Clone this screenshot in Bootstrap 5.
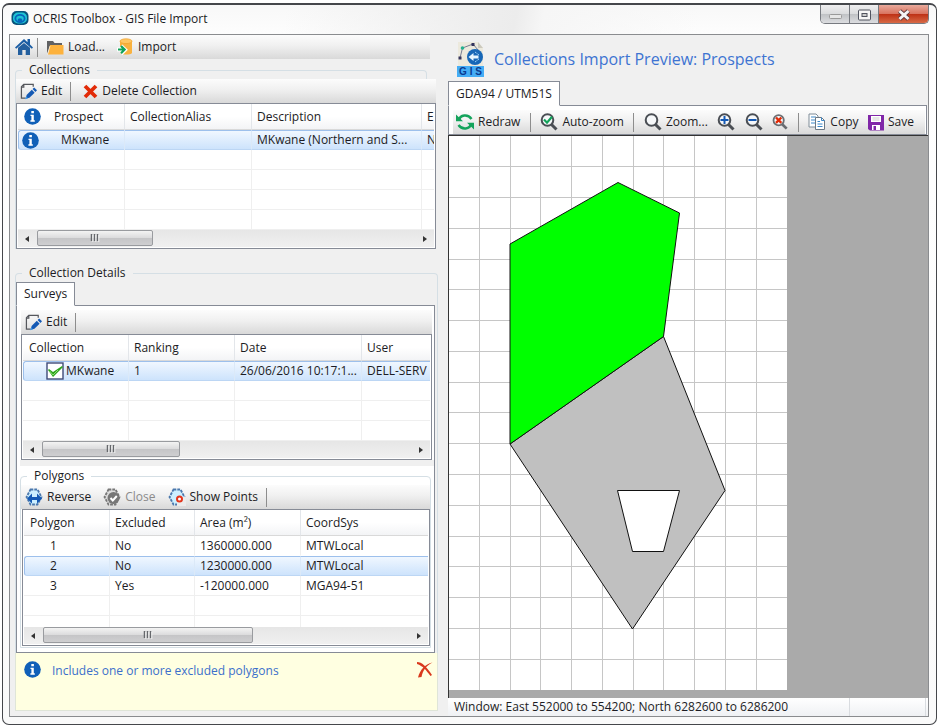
<!DOCTYPE html>
<html lang="en">
<head>
<meta charset="utf-8">
<meta name="viewport" content="width=device-width, initial-scale=1">
<title>OCRIS Toolbox - GIS File Import</title>
<link href="https://cdn.jsdelivr.net/npm/bootstrap@5.3.0/dist/css/bootstrap.min.css" rel="stylesheet">
<style>
body{font-family:"Open Sans","Noto Sans",sans-serif;font-size:12px;line-height:16px;color:#1c1c24;background:#fff}
button{font:inherit;color:inherit;background:none;border:0;padding:0}
svg{flex:none}
.win{margin:3px 2px;min-height:calc(100vh - 6px);border:1px solid #45474b;border-top-width:2px;border-radius:7px;background:linear-gradient(#f8f8f8,#fff 40px,#fafafa);padding:0 7px 7px 6px}
.titlebar{height:29px;gap:4px;padding-left:2px;background:linear-gradient(100deg,transparent 30%,#ececec 55%,#f6f6f6 58%,transparent 75%)}
.titlebar h1{font-size:12px;line-height:16px;font-weight:400;margin:0}
.winbtns{height:19px;border:1px solid #777a80;border-top:0;border-radius:0 0 5px 5px;overflow:hidden}
.winbtns button{width:29px;background:linear-gradient(#efeff0,#dadbdd 50%,#bfc1c4 50%,#dcdde0);border-right:1px solid #777a80}
.winbtns button:last-child{width:49px;border:0;background:linear-gradient(#e9aa9c,#d97460 48%,#bd2f14 50%,#d86a45)}
.client{border:1px solid #8a8c8f;background:#f0f0f0;display:grid;grid-template-columns:minmax(0,438fr) minmax(0,480fr)}
.leftpane{padding:0 0 5px 5px}
.tools{background:linear-gradient(#fcfcfc,#f0f0f0 45%,#d9d9d9);height:24px}
.tools button{display:flex;align-items:center;gap:4px;white-space:nowrap}
.tools button:disabled{color:#8b8b8b}
.sep{width:1px;height:19px;background:#8d8d8d}
.maintools{margin:0 18px 0 -5px;padding-left:5px}
fieldset{border:1px solid #d5dfe5;border-bottom:0;border-radius:4px 4px 0 0;min-width:0}
legend{float:none;width:auto;font-size:12px;line-height:16px;margin:0 0 1px 6px;padding:0 7px}
.fs-collections{margin:3px 21px 0 0}
.fs-collections>.inner{margin-right:-10px}
.fs-details{margin:16px 10px 0 0}
.listbox{border:1px solid #868b96;background:#fff;padding:0 1px 1px;overflow:hidden}
.clip{overflow:hidden}
.listbox table{table-layout:fixed;width:100%;border-collapse:separate;border-spacing:0}
.listbox th,.listbox td{font-weight:400;white-space:nowrap;overflow:hidden;padding:0 0 0 5px;border-right:1px solid #efefef;border-bottom:1px solid #efefef;vertical-align:middle;height:20px;line-height:16px}
.listbox th{height:26px;border-bottom-color:#d9d9d9;border-right-color:#e3e6ea;background:linear-gradient(#fff 50%,#f3f4f6)}
.listbox th:first-child{padding-left:6px}
.listbox th:last-child,.listbox td:last-child{border-right:0}
.listbox .sel td{background:linear-gradient(#f0f7ff,#cde3fc);border-top:1px solid #9dc0ec;border-bottom-color:#bcd6f4;border-right-color:#dbe9f8}
.listbox .sel td:first-child{border-left:1px solid #9dc0ec;border-radius:3px 0 0 3px}
.listbox .noline td{border-bottom-color:transparent}
.listbox .cut td{height:11px;border-bottom:0}
.iconcell{display:flex;align-items:center;height:18px}
.t1 .sel td:first-child{padding-left:3px}
.t1 .iconcell{gap:13px}
.t1 .sel .iconcell{gap:22px}
.t3 td:first-child{padding-left:26px}
.t3 .sel td:first-child{padding-left:25px}
.t2 .sel td:first-child{padding-left:22px}
.t2 .iconcell{gap:2px}
.sbar{height:17px;background:linear-gradient(#e6e6e6,#f0f0f0)}
.sbar .arrow{width:19px;display:grid;place-items:center}
.thumb{border:1px solid #999b9f;border-radius:2px;background:linear-gradient(#f3f3f3,#dcdcdd 48%,#c5c5c7 52%,#cfcfd1);height:16px;display:grid;place-items:center}
.w-a{width:28%}.w-b{width:34%}.w-c{width:52%}
.tabstrip{border-bottom:1px solid #868b96}
.tabstrip .nav-link{font-size:12px;line-height:16px;padding:3px 7px;height:24px;color:#1c1c24;border:1px solid #868b96;border-bottom-color:#fff;border-radius:0;background:#fff;margin-bottom:-1px}
.tabstrip .nav-link:hover{border-color:#868b96 #868b96 #fff}
.tabbody{border:1px solid #868b96;border-top:0;background:#fff;padding:4px 2px 4px 4px}
.details-tabs{margin-right:2px}
.band{height:6px;background:#f0f0f0;margin:0 -2px 2px -1px}
.fs-poly{margin:0 1px 0 -1px;border-bottom:1px solid #d5dfe5}
.fs-poly .listbox{margin:0 0 1px 1px}
.note{background:#ffffe1;border:1px solid #dfe5d8;border-top:0;color:#3b6fcb;min-height:58px;margin-right:10px}
.note p{margin:10px 0 0 11px}
.preview-head{padding:6px 0 0 9px;gap:10px}
.preview-title{color:#3e74d2;font-size:16px;line-height:24px;font-weight:400;margin:0}
.maptabs{margin-right:1px}
.maptabs .tabbody{padding:4px 1px 1px 4px;height:29px}
.maptabs .tabstrip .nav-link{height:25px;padding:3px 7px}
.maptools{padding:0 11px 0 3px}
.mapview{background:#aaa;border-top:1px solid #333;border-left:1px solid #333;min-height:563px}
.statusbar{background:linear-gradient(#fff,#eff1f4);height:18px;line-height:18px}
.statusbar .pane{border-right:1px solid #d9dce0;padding-left:6px}
.pane-end{width:76px;margin-right:2px}
</style>
<script src="https://cdn.jsdelivr.net/npm/bootstrap@5.3.0/dist/js/bootstrap.bundle.min.js"></script>
</head>
<body>
<svg width="0" height="0" class="position-absolute" aria-hidden="true">
  <defs>
    <symbol id="i-info" viewBox="0 0 17 17"><circle cx="8.500" cy="8.500" r="8.300" fill="#1060b8"/><path d="M7.300 3h2.600v2.300H7.300zM6.500 6.700h3.300v5.600h1v1.400H6.400v-1.400h1V8h-.9z" fill="#fff"/></symbol>
    <symbol id="i-edit" viewBox="0 0 18 18"><path d="M14 4V1.500H4L1.500 4V16H6M1.500 4.500H4V1.500" fill="none" stroke="#55575c" stroke-width="1.300"/><path d="M6 16.700l1-4 5.500-5.500 3 3-5.500 5.500z" fill="#1459b4"/><path d="M13.300 6.400l1.700-1.700 3 3-1.700 1.700z" fill="#1459b4"/><path d="M5.500 17.200l1-3 2 2z" fill="#3b9bef"/></symbol>
    <symbol id="i-lens" viewBox="0 0 18 18"><circle cx="7.500" cy="7" r="5.800" fill="#f6f8fa" stroke="#4a4e54" stroke-width="2"/><path d="M11.500 11.500l5 5" stroke="#4a4e54" stroke-width="3"/></symbol>
    <symbol id="i-grip" viewBox="0 0 10 8"><path d="M1.500 0v7M4.500 0v7M7.500 0v7" stroke="#66686c" stroke-width="1.500"/><path d="M2.800 1v7M5.800 1v7M8.800 1v7" stroke="#fff" stroke-width=".8"/></symbol>
    <symbol id="i-left" viewBox="0 0 5 8"><path d="M4 1v6L0 4z" fill="#333"/></symbol>
    <symbol id="i-right" viewBox="0 0 5 8"><path d="M1 1v6l4-3z" fill="#333"/></symbol>
    <symbol id="i-oct" viewBox="0 0 18 18"><path d="M5.500 1.500h7l4 7.500-4 7.500h-7L1.500 9z" fill="#ccefff"/><path d="M5.500 1.500h7L16.500 9l-4 7.500h-7L1.500 9z" fill="none" stroke="currentColor" stroke-width="1.800" stroke-dasharray="2.800 1"/></symbol>
  </defs>
</svg>

<div class="win">
  <header class="titlebar d-flex align-items-start">
    <svg class="mt-1" width="18" height="18" viewBox="0 0 18 18"><rect x=".5" y="2" width="17" height="14" rx="5" fill="#08527c"/><rect x="2" y="3.500" width="14" height="11" rx="5" fill="#1fc4d5"/><ellipse cx="9" cy="9.500" rx="4.600" ry="3.700" fill="none" stroke="#0765bb" stroke-width="1.800"/><ellipse cx="9" cy="11" rx="2.300" ry="1.700" fill="#0765bb"/></svg>
    <h1 class="mt-1 pt-1 lh-1">OCRIS Toolbox - GIS File Import</h1>
    <div class="winbtns d-flex ms-auto">
      <button type="button" aria-label="Minimize"><svg width="13" height="12" viewBox="0 0 13 12"><rect x=".5" y="5.500" width="12" height="4" rx="1" fill="#e6e6e6" stroke="#999"/></svg></button>
      <button type="button" aria-label="Maximize"><svg width="13" height="14" viewBox="0 0 13 14"><rect x=".5" y="2" width="12" height="10" rx="1" fill="#f7f7f7" stroke="#51545f"/><rect x="4" y="5.500" width="5" height="3" fill="#ccc" stroke="#51545f"/></svg></button>
      <button type="button" aria-label="Close"><svg width="14" height="14" viewBox="0 0 14 14"><path d="M2.500 3l9 8M11.500 3l-9 8" stroke="#5d3a3e" stroke-width="4.600"/><path d="M2.500 3l9 8M11.500 3l-9 8" stroke="#f5f5f5" stroke-width="3"/></svg></button>
    </div>
  </header>

  <main class="client">
    <section class="leftpane d-flex flex-column">
      <div class="tools maintools d-flex align-items-center" role="toolbar" aria-label="File">
        <button type="button" aria-label="Home"><svg width="18" height="18" viewBox="0 0 18 18"><path d="M9 1L0 9.500l1.200 1.200L9 4l7.800 6.700L18 9.500l-3-2.900V1h-2.500v3.300z" fill="#1b5da4"/><path d="M3 9.800L9 5l6 4.800V17h-4.300v-5H7.300v5H3z" fill="#245f9e"/></svg></button>
        <span class="sep ms-1 me-2"></span>
        <button type="button" class="me-2 pe-1"><svg width="18" height="17" viewBox="0 0 18 17"><path d="M1 15V2h6l1.500 2H16v3H4z" fill="#606163"/><path d="M4 6h13.500v9.500H1.800z" fill="#fdb23d"/><path d="M4 7L1.500 15.500" stroke="#fff" stroke-width=".6"/></svg>Load...</button>
        <button type="button"><svg width="17" height="18" viewBox="0 0 17 18"><path d="M3 3v12c1 2 11 2 12 0V3" fill="#f9b23f"/><ellipse cx="9" cy="3.200" rx="6" ry="2.400" fill="#ffc763" stroke="#ef9f29" stroke-width=".7"/><path d="M0 11.500h6M4 8l4 3.800-4 4" fill="none" stroke="#fff" stroke-width="4"/><path d="M1 11.500h6M4 8l3.600 3.600L4 15.200" fill="none" stroke="#12a35a" stroke-width="2.200"/></svg>Import</button>
      </div>

      <fieldset class="fs-collections">
        <legend>Collections</legend>
        <div class="inner">
          <div class="tools d-flex align-items-center ps-1" role="toolbar" aria-label="Collections">
            <button type="button"><svg width="17" height="17"><use href="#i-edit"/></svg>Edit</button>
            <span class="sep ms-2 ps-0 me-2"></span>
            <button type="button" class="ps-1"><svg width="15" height="15" viewBox="0 0 14 15"><path d="M1.500 2l11 11M12.500 2l-11 11" stroke="#e22b08" stroke-width="3.800"/></svg>Delete Collection</button>
          </div>
          <div class="listbox">
            <div class="clip"><table class="t1">
              <colgroup><col width="107"><col width="127"><col width="170"><col></colgroup>
              <thead><tr><th scope="col"><div class="iconcell"><svg width="17" height="17"><use href="#i-info"/></svg>Prospect</div></th><th scope="col">CollectionAlias</th><th scope="col">Description</th><th scope="col">E</th></tr></thead>
              <tbody>
                <tr class="sel"><td><div class="iconcell"><svg width="17" height="17"><use href="#i-info"/></svg>MKwane</div></td><td></td><td>MKwane (Northern and S...</td><td>N</td></tr>
                <tr><td></td><td></td><td></td><td></td></tr>
                <tr><td></td><td></td><td></td><td></td></tr>
                <tr><td></td><td></td><td></td><td></td></tr>
                <tr><td></td><td></td><td></td><td></td></tr>
              </tbody>
            </table></div>
            <div class="sbar d-flex"><span class="arrow"><svg width="5" height="8"><use href="#i-left"/></svg></span><span class="thumb w-a"><svg width="10" height="8"><use href="#i-grip"/></svg></span><span class="arrow ms-auto"><svg width="5" height="8"><use href="#i-right"/></svg></span></div>
          </div>
        </div>
      </fieldset>

      <fieldset class="fs-details">
        <legend>Collection Details</legend>
        <div class="details-tabs">
          <div class="nav tabstrip" role="tablist"><button type="button" class="nav-link active" role="tab" aria-selected="true">Surveys</button></div>
          <div class="tabbody">
            <div class="tools d-flex align-items-center ps-1" role="toolbar" aria-label="Surveys">
              <button type="button"><svg width="17" height="17"><use href="#i-edit"/></svg>Edit</button>
              <span class="sep ms-2"></span>
            </div>
            <div class="listbox">
              <div class="clip"><table class="t2">
                <colgroup><col width="106"><col width="106"><col width="127"><col></colgroup>
                <thead><tr><th scope="col">Collection</th><th scope="col">Ranking</th><th scope="col">Date</th><th scope="col">User</th></tr></thead>
                <tbody>
                  <tr class="sel"><td><div class="iconcell"><svg width="18" height="18" viewBox="0 0 18 18"><rect x="1" y="1" width="16" height="16" fill="#fff" stroke="#3f4a78" stroke-width="1.400"/><path d="M2 8l5 7L17 5l-1-1-9 6-4-3z" fill="#2fa31e"/><path d="M3.500 9l3.500 4 5-5" fill="none" stroke="#8be070"/></svg>MKwane</div></td><td>1</td><td>26/06/2016 10:17:1...</td><td>DELL-SERV</td></tr>
                  <tr><td></td><td></td><td></td><td></td></tr>
                  <tr><td></td><td></td><td></td><td></td></tr>
                  <tr><td></td><td></td><td></td><td></td></tr>
                </tbody>
              </table></div>
              <div class="sbar d-flex"><span class="arrow"><svg width="5" height="8"><use href="#i-left"/></svg></span><span class="thumb w-b"><svg width="10" height="8"><use href="#i-grip"/></svg></span><span class="arrow ms-auto"><svg width="5" height="8"><use href="#i-right"/></svg></span></div>
            </div>
            <div class="band"></div>
            <fieldset class="fs-poly">
              <legend>Polygons</legend>
              <div class="tools d-flex align-items-center ps-1" role="toolbar" aria-label="Polygons">
                <button type="button" class="me-2 pe-1"><svg width="18" height="18" viewBox="0 0 18 18" color="#4b78ad"><use href="#i-oct"/><path d="M2 10.500l5-5V9h5V5.500l5 5-5 5V12H7v3.500z" fill="#1459b4"/></svg>Reverse</button>
                <button type="button" class="me-2 pe-1" disabled><svg width="18" height="18" viewBox="0 0 18 18"><path d="M5.500 1.500h7L16.500 9l-4 7.500h-7L1.500 9z" fill="#ddd"/><path d="M5.500 1.500h7L16.500 9l-4 7.500h-7L1.500 9z" fill="none" stroke="#777" stroke-width="1.800" stroke-dasharray="2.800 1"/><circle cx="10.500" cy="10" r="6" fill="#777"/><path d="M7.500 10l2.300 2.500 4-4.500" fill="none" stroke="#fff" stroke-width="2"/></svg>Close</button>
                <button type="button"><svg width="18" height="18" viewBox="0 0 18 18" color="#4b78ad"><use href="#i-oct"/><path d="M9 9h9v9H9z" fill="#ececec"/><circle cx="11.500" cy="11" r="2.500" fill="#fff" stroke="#e4361c" stroke-width="2"/></svg>Show Points</button>
                <span class="sep ms-2"></span>
              </div>
              <div class="listbox">
                <div class="clip"><table class="t3">
                  <colgroup><col width="86"><col width="85"><col width="106"><col></colgroup>
                  <thead><tr><th scope="col">Polygon</th><th scope="col">Excluded</th><th scope="col">Area (m²)</th><th scope="col">CoordSys</th></tr></thead>
                  <tbody>
                    <tr class="noline"><td>1</td><td>No</td><td>1360000.000</td><td>MTWLocal</td></tr>
                    <tr class="sel"><td>2</td><td>No</td><td>1230000.000</td><td>MTWLocal</td></tr>
                    <tr><td>3</td><td>Yes</td><td>-120000.000</td><td>MGA94-51</td></tr>
                    <tr><td></td><td></td><td></td><td></td></tr>
                    <tr class="cut"><td></td><td></td><td></td><td></td></tr>
                  </tbody>
                </table></div>
                <div class="sbar d-flex"><span class="arrow"><svg width="5" height="8"><use href="#i-left"/></svg></span><span class="thumb w-c"><svg width="10" height="8"><use href="#i-grip"/></svg></span><span class="arrow ms-auto"><svg width="5" height="8"><use href="#i-right"/></svg></span></div>
              </div>
            </fieldset>
          </div>
        </div>
      </fieldset>
      <div class="note d-flex align-items-start flex-grow-1" role="status">
        <svg class="mt-2 ms-2" width="17" height="17"><use href="#i-info"/></svg>
        <p>Includes one or more excluded polygons</p>
        <button type="button" class="ms-auto mt-2 me-1" aria-label="Dismiss"><svg width="16" height="16" viewBox="0 0 16 16"><path d="M0 0c5 0 9 4 15 13l-1.500 1C9 8 6 4 0 2zM15.500.5C9 4 6 8 4.500 15l-3.500.5C3 8 8 2 15.500.5z" fill="#d9391d"/></svg></button>
      </div>
    </section>

    <section class="d-flex flex-column">
      <div class="preview-head d-flex align-items-center">
        <svg width="27" height="36" viewBox="0 0 27 36"><path d="M1 1h20l5 6v19H1z" fill="#ece9dd"/><path d="M21 1v6h5z" fill="#ccc9bd"/><path d="M3 17L5.500 7 16 3l5 6" fill="none" stroke="#777c90"/><path d="M1.500 15.500h3v3h-3zM14.500 2h3v3h-3z" fill="#34345c"/><circle cx="5.500" cy="7" r="1.800" fill="#25b28f"/><circle cx="18" cy="16" r="8" fill="#1767b7"/><path d="M11.500 16l5-4v2.500h5v3h-5V20z" fill="#e5f5ff"/><path d="M18 11l4 3M18 21l4-3" stroke="#9cd1f8" stroke-dasharray="2 1"/><path d="M0 25h27v11H0z" fill="#45adf5"/><text x="13.500" y="34" text-anchor="middle" font-family="Liberation Sans,sans-serif" font-size="10" font-weight="bold" fill="#0a3a90">G I S</text></svg>
        <h2 class="preview-title">Collections Import Preview: Prospects</h2>
      </div>
      <div class="maptabs pt-1">
        <div class="nav tabstrip" role="tablist"><button type="button" class="nav-link active" role="tab" aria-selected="true">GDA94 / UTM51S</button></div>
        <div class="tabbody">
          <div class="tools maptools d-flex align-items-center justify-content-between" role="toolbar" aria-label="Map">
            <button type="button"><svg width="18" height="18" viewBox="0 0 18 18"><path d="M2.800 7.500C4 1.500 12 .8 15.500 6M15.200 10.500C14 16.500 6 17.200 2.500 12" fill="none" stroke="#14a35b" stroke-width="2.400"/><path d="M0 1.500v6.800h7zM18 16.500V9.700h-7z" fill="#14a35b"/></svg>Redraw</button>
            <span class="sep"></span>
            <button type="button"><svg width="18" height="18" viewBox="0 0 18 18"><use href="#i-lens"/><path d="M4 6.500l3 3.200 5-6" fill="none" stroke="#12a35a" stroke-width="2.200"/></svg>Auto-zoom</button>
            <span class="sep"></span>
            <button type="button"><svg width="18" height="18"><use href="#i-lens"/></svg>Zoom...</button>
            <button type="button" aria-label="Zoom in"><svg width="18" height="18" viewBox="0 0 18 18"><use href="#i-lens"/><path d="M3.500 7h8M7.500 3v8" stroke="#1459b4" stroke-width="2"/></svg></button>
            <button type="button" aria-label="Zoom out"><svg width="18" height="18" viewBox="0 0 18 18"><use href="#i-lens"/><path d="M3.500 7h8" stroke="#1459b4" stroke-width="2"/></svg></button>
            <button type="button" aria-label="Reset zoom"><svg width="16" height="16" viewBox="0 0 18 18"><use href="#i-lens" opacity=".8"/><path d="M4.500 4l6 6M10.500 4l-6 6" stroke="#e22b08" stroke-width="2.600"/></svg></button>
            <span class="sep"></span>
            <button type="button"><svg width="18" height="18" viewBox="0 0 18 18"><path d="M1 1h7l2 2v11H1z" fill="#fff" stroke="#7e8c98"/><path d="M3 4h5M3 7h4M3 10h4" stroke="#3c88c9"/><path d="M7.500 4.500h6l3 3v9h-9z" fill="#fff" stroke="#6b7884"/><path d="M13.500 4.500v3h3M9.500 8.500H12M9.500 11h5M9.500 13.500h5" fill="none" stroke="#3c88c9"/></svg>Copy</button>
            <button type="button"><svg width="16" height="17" viewBox="0 0 16 17"><path d="M0 1h16v15.500H2L0 15z" fill="#8027a8"/><path d="M3 2h10v6H3zM4 11h8v5H4z" fill="#fff"/><path d="M4.500 4h7M4.500 6h7" stroke="#ccc"/><path d="M5.500 12h2.500v4H5.500z" fill="#8027a8"/></svg>Save</button>
          </div>
        </div>
      </div>
      <div class="mapview flex-grow-1">
        <svg class="d-block" width="338" height="554" viewBox="449 135 338 554" role="img" aria-label="Map of prospect polygons">
          <path d="M449 135h338v554H449z" fill="#fff"/>
          <path d="M479.500 135v554M510.500 135v554M540.500 135v554M571.500 135v554M602.500 135v554M633.500 135v554M663.500 135v554M694.500 135v554M725.500 135v554M756.500 135v554M449 165.500h338M449 196.500h338M449 227.500h338M449 258.500h338M449 288.500h338M449 319.500h338M449 350.500h338M449 381.500h338M449 411.500h338M449 442.500h338M449 473.500h338M449 504.500h338M449 535.500h338M449 565.500h338M449 596.500h338M449 627.500h338M449 658.500h338" stroke="#c6c6c6" fill="none"/>
          <path d="M663.500 335.500L725 489.500 632.500 628 510 443z" fill="#c0c0c0" stroke="#111"/>
          <path d="M618 181.500L679.500 212 663.500 335.500 510 443V243z" fill="#0f0" stroke="#111"/>
          <path d="M617.500 489.500h62L663.500 550.500h-31z" fill="#fff" stroke="#111"/>
        </svg>
      </div>
      <footer class="statusbar d-flex">
        <span class="pane flex-grow-1">Window: East 552000 to 554200; North 6282600 to 6286200</span>
        <span class="pane pane-end"></span>
      </footer>
    </section>
  </main>
</div>
</body>
</html>
